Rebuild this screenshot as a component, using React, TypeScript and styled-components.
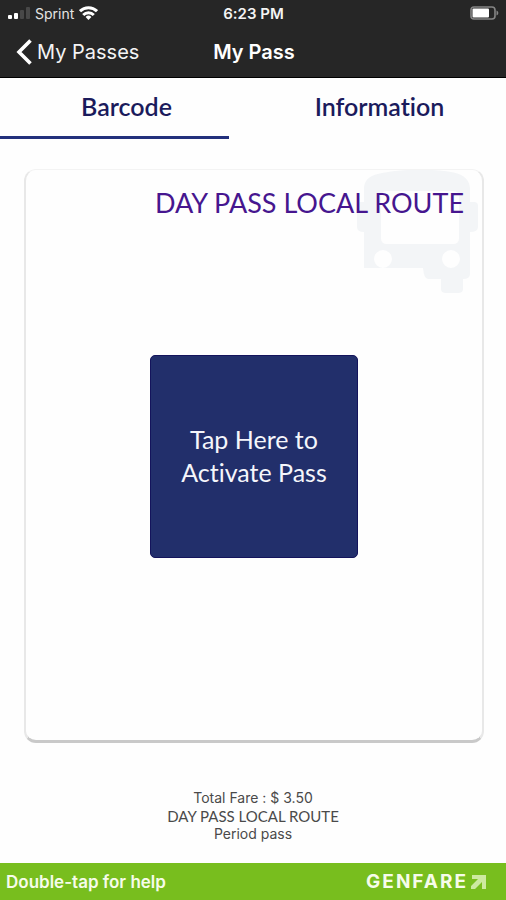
import React from "react";
import styled, { createGlobalStyle } from "styled-components";

const Global = createGlobalStyle`
  *, *::before, *::after { box-sizing: border-box; }
  body { margin: 0; background: #fefefe; font-family: Inter, sans-serif; font-variant-ligatures: none; }
  button { border: 0; padding: 0; background: none; font: inherit; color: inherit; cursor: pointer; }
  svg { display: block; }
`;

const Screen = styled.div`
  display: flex;
  flex-direction: column;
  min-height: 100vh;
`;

const Header = styled.header`
  background: #262626;
  border-bottom: 1px solid #000;
  color: #fff;
`;

const TriRow = styled.div`
  display: grid;
  grid-template-columns: 1fr auto 1fr;
  align-items: center;
`;

const StatusBar = styled(TriRow)`
  height: 26px;
  padding: 0 7px 0 8px;
  font-size: 14px;
  color: #e4e4e4;
`;

const Carrier = styled.div`
  display: flex;
  align-items: center;
  gap: 5px;
`;

const Clock = styled.time`
  font-size: 15px;
  font-weight: 600;
  color: #f4f4f4;
`;

const EndSlot = styled.div`
  justify-self: end;
`;

const NavBar = styled(TriRow)`
  height: 51px;
  padding: 0 14px 0 16px;
`;

const BackButton = styled.button`
  display: flex;
  align-items: center;
  gap: 5px;
  justify-self: start;
  font-size: 20px;
  color: #f4f4f4;
`;

const Title = styled.h1`
  margin: 0;
  font-size: 20px;
  font-weight: 600;
`;

const Tabs = styled.div`
  display: grid;
  grid-template-columns: 1fr 1fr;
`;

const Tab = styled.button<{ $active?: boolean }>`
  position: relative;
  height: 61px;
  padding-bottom: 5px;
  font-family: Lato, sans-serif;
  font-size: 25px;
  font-weight: 600;
  color: #1b1b5c;

  &::after {
    content: "";
    display: ${(p) => (p.$active ? "block" : "none")};
    position: absolute;
    left: 0;
    right: 24px;
    bottom: 0;
    height: 3px;
    background: #22307c;
  }
`;

const Card = styled.main`
  position: relative;
  flex: 1;
  display: flex;
  flex-direction: column;
  margin: 30px 22px 0 24px;
  border: 2px solid #e8e8e8;
  border-top: 1px solid #f3f3f3;
  border-bottom: 3px solid #c9c9c9;
  border-radius: 12px;
  background: #fefefe;
`;

const BusArt = styled.div`
  position: absolute;
  top: 0;
  right: 4px;
`;

const PassName = styled.h2`
  position: relative;
  margin: 0;
  padding: 16px 18px 0 0;
  text-align: right;
  font-family: Lato, sans-serif;
  font-size: 27px;
  line-height: 34px;
  font-weight: 400;
  color: #46168f;
`;

const ActivateArea = styled.div`
  flex: 1;
  display: flex;
  align-items: center;
  justify-content: center;
  padding-bottom: 48px;
`;

const ActivateButton = styled.button`
  width: 208px;
  height: 203px;
  border: 1px solid #14145c;
  border-radius: 5px;
  background: #222f6b;
  color: #f5f6fb;
  font-family: Lato, sans-serif;
  font-size: 25px;
  line-height: 33px;
`;

const Summary = styled.section`
  padding: 46px 0 20px;
  text-align: center;
  font-size: 15px;
  line-height: 18px;
  color: #4a4a4a;
`;

const SummaryLine = styled.p<{ $lato?: boolean }>`
  margin: 0;
  font-family: ${(p) => (p.$lato ? "Lato" : "Inter")}, sans-serif;
  font-size: ${(p) => (p.$lato ? "15px" : "14px")};
`;

const Footer = styled.footer`
  display: flex;
  align-items: center;
  justify-content: space-between;
  height: 37px;
  padding: 0 20px 0 6px;
  background: #78be1e;
  color: #f6fcea;
`;

const Help = styled.span`
  font-size: 17px;
  font-weight: 600;
`;

const Brand = styled.div`
  display: flex;
  align-items: center;
  gap: 3px;
  font-size: 19px;
  font-weight: 700;
  letter-spacing: 2px;
`;

const SignalIcon = () => (
  <svg width="22" height="12" viewBox="0 0 22 12" fill="#fff">
    <rect x="0" y="8" width="4" height="4" rx="1" />
    <rect x="6" y="6" width="4" height="6" rx="1" />
    <rect x="12" y="3" width="4" height="9" rx="1" fill="#484848" />
    <rect x="18" y="0" width="4" height="12" rx="1" fill="#484848" />
  </svg>
);

const WifiIcon = () => (
  <svg width="19" height="14" viewBox="0 0 19 14" fill="none" stroke="#fff" strokeWidth="3">
    <path d="M1 5.2a12.2 12.2 0 0 1 17 0" />
    <path d="M4.2 9a7.6 7.6 0 0 1 10.6 0" />
    <path d="M9.5 14 6.6 11a4.2 4.2 0 0 1 5.8 0Z" fill="#fff" stroke="none" />
  </svg>
);

const BatteryIcon = () => (
  <svg width="29" height="14" viewBox="0 0 29 14">
    <rect x="1" y="1" width="24" height="12" rx="3" fill="none" stroke="#858585" strokeWidth="1.6" />
    <rect x="2.5" y="2.5" width="16.5" height="9" rx="1" fill="#fff" />
    <path d="M26.5 4.5c2.4 1 2.4 4 0 5Z" fill="#858585" />
  </svg>
);

const BackIcon = () => (
  <svg width="16" height="26" viewBox="0 0 16 26" fill="none" stroke="#fff" strokeWidth="3.6">
    <path d="M14.5 1.5 3 13l11.5 11.5" />
  </svg>
);

const BusIcon = () => (
  <svg width="121" height="123" viewBox="0 0 121 123">
    <path
      fill="#f3f5f7"
      fillRule="evenodd"
      d="M7 18C8 6 18 4 31 2 49-1 77-1 94 2c10 2 18 5 19 16v14h4q4 0 4 4v21q0 5-8 5v42q0 5-7 5v10q0 4-5 4H89q-5 0-5-4v-10H71q-4 0-5-11H7V62q-7 0-7-5V36q0-4 4-4h3Z
      M30 21q-6 0-6 6v41q0 6 6 6h66q6 0 6-6V27q0-6-6-6Z
      M26 80a9 9 0 1 0 0 18 9 9 0 1 0 0-18Z
      M94 80a9 9 0 1 0 0 18 9 9 0 1 0 0-18Z"
    />
  </svg>
);

const BrandArrow = () => (
  <svg width="15" height="14" viewBox="0 0 15 14" fill="#cdeaa0">
    <path d="M1 0h14v14h-4V7l-7 7H0v-3l7-7H1Z" />
  </svg>
);

export default function App() {
  return (
    <Screen>
      <Global />
      <Header>
        <StatusBar>
          <Carrier>
            <SignalIcon />
            <span>Sprint</span>
            <WifiIcon />
          </Carrier>
          <Clock>6:23 PM</Clock>
          <EndSlot>
            <BatteryIcon />
          </EndSlot>
        </StatusBar>
        <NavBar>
          <BackButton type="button">
            <BackIcon />
            My Passes
          </BackButton>
          <Title>My Pass</Title>
        </NavBar>
      </Header>
      <Tabs role="tablist">
        <Tab type="button" role="tab" aria-selected="true" $active>
          Barcode
        </Tab>
        <Tab type="button" role="tab" aria-selected="false">
          Information
        </Tab>
      </Tabs>
      <Card>
        <BusArt aria-hidden="true">
          <BusIcon />
        </BusArt>
        <PassName>DAY PASS LOCAL ROUTE</PassName>
        <ActivateArea>
          <ActivateButton type="button">
            Tap Here to
            <br />
            Activate Pass
          </ActivateButton>
        </ActivateArea>
      </Card>
      <Summary>
        <SummaryLine>Total Fare : $ 3.50</SummaryLine>
        <SummaryLine $lato>DAY PASS LOCAL ROUTE</SummaryLine>
        <SummaryLine>Period pass</SummaryLine>
      </Summary>
      <Footer>
        <Help>Double-tap for help</Help>
        <Brand>
          GENFARE
          <BrandArrow />
        </Brand>
      </Footer>
    </Screen>
  );
}
